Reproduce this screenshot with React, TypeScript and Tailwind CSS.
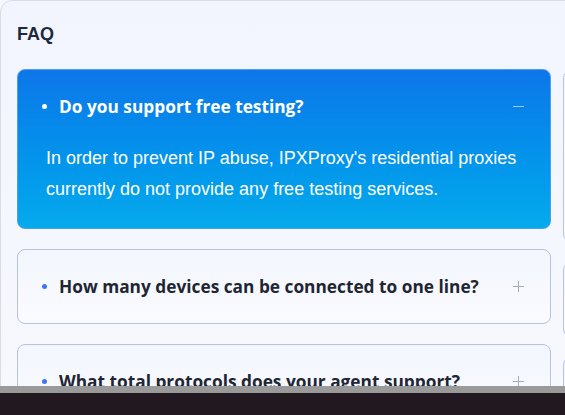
import React from "react";

type Faq = {
  q: string;
  a?: string;
};

const openItem: Faq = {
  q: "Do you support free testing?",
  a: "In order to prevent IP abuse, IPXProxy's residential proxies currently do not provide any free testing services.",
};

const closedLeft: Faq[] = [
  { q: "How many devices can be connected to one line?" },
  { q: "What total protocols does your agent support?" },
];

// right column sits almost entirely off screen, only its borders peek in
const rightHeights = ["h-[172px]", "h-[75px]", "h-[75px]"];

function PlusIcon() {
  return (
    <span className="relative mr-[2px] h-[11px] w-[11px]">
      <span className="absolute left-0 top-[5px] h-px w-[11px] bg-[#a6abb5]" />
      <span className="absolute left-[5px] top-0 h-[11px] w-px bg-[#a6abb5]" />
    </span>
  );
}

function FaqCard({ item }: { item: Faq }) {
  return (
    <div className="flex h-[75px] items-center rounded-lg border border-[#b9c4dc] bg-gradient-to-b from-[#f3f6fe] to-[#fafbff] px-6">
      <span className="h-[5px] w-[5px] rounded-full bg-[#3f74f4]" />
      <span className="ml-3 flex-1 text-[17.3px] font-bold text-[#1f2633]">{item.q}</span>
      <PlusIcon />
    </div>
  );
}

function FaqCardOpen({ item }: { item: Faq }) {
  return (
    <div className="rounded-lg border border-[#4f9df0] bg-gradient-to-b from-[#0e76e9] to-[#06aaec] text-white">
      <div className="flex h-[73px] items-center px-6">
        <span className="h-[5px] w-[5px] rounded-full bg-white" />
        <span className="ml-3 flex-1 text-[17.3px] font-bold">{item.q}</span>
        <span className="mr-[2px] h-[1.5px] w-[11px] bg-white/60" />
      </div>
      <p
        className="pb-[23px] pl-7 pr-6 text-[18px] leading-[31px]"
        style={{ fontFamily: '"Liberation Sans", Arial, sans-serif' }}
      >
        {item.a}
      </p>
    </div>
  );
}

export default function App() {
  return (
    <div className="relative h-[415px] w-[565px] overflow-hidden bg-[#f7f8fd]">
      <div
        className="w-[1100px] rounded-tl-xl border border-[#d9dce4] bg-gradient-to-b from-[#f2f5fe] to-[#f8f9fe] px-4 pb-10 pt-[20px]"
        style={{ fontFamily: '"Open Sans", "Liberation Sans", sans-serif' }}
      >
        <h1
          className="text-[18px] font-bold leading-[26px] text-[#1e2a3b]"
          style={{ fontFamily: '"Liberation Sans", Arial, sans-serif' }}
        >
          FAQ
        </h1>
        <div className="mt-[22px] grid grid-cols-[534px_534px] gap-x-3">
          <div className="flex flex-col gap-5">
            <FaqCardOpen item={openItem} />
            {closedLeft.map((f) => (
              <FaqCard key={f.q} item={f} />
            ))}
          </div>
          <div className="flex flex-col gap-5 pt-px">
            {rightHeights.map((h, i) => (
              <div
                key={i}
                className={"rounded-lg border border-[#b9c4dc] bg-gradient-to-b from-[#f3f6fe] to-[#fafbff] " + h}
              />
            ))}
          </div>
        </div>
      </div>
      {/* taskbar strip overlaying the page */}
      <div className="absolute bottom-0 left-0 right-0 h-[29px] bg-[#211820]">
        <div className="h-[7px] bg-[#9a9a9a]" />
      </div>
    </div>
  );
}
